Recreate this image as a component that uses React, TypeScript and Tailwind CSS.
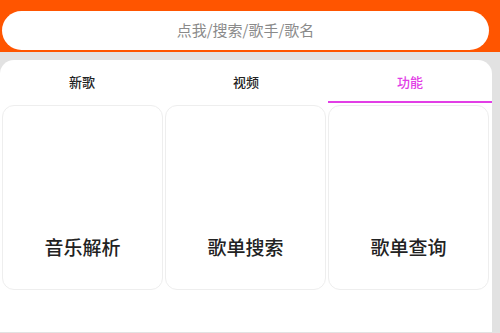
import React from 'react';

const tabs = ['新歌', '视频', '功能'];
const tools = ['音乐解析', '歌单搜索', '歌单查询'];

export default function App() {
  const active = 2;
  return (
    <div
      className="flex h-[333px] w-[500px] flex-col overflow-hidden bg-[#e2e2e2]"
      style={{ fontFamily: '"Noto Sans CJK SC", "Noto Sans", sans-serif' }}
    >
      {/* search header */}
      <div className="h-[52px] shrink-0 bg-[#ff5500] pl-[2px] pr-[11px] pt-[11px]">
        <div className="flex h-[39px] items-center justify-center rounded-full bg-white text-[15px] text-[#8a8a8a]">
          点我/搜索/歌手/歌名
        </div>
      </div>

      <div className="flex flex-1 pb-[1px] pr-[8px] pt-[8px]">
        <div className="flex flex-1 flex-col rounded-t-[14px] bg-white">
          {/* tabs */}
          <div className="grid h-[43px] grid-cols-3">
            {tabs.map((t, i) => (
              <div key={t} className="relative flex items-center justify-center">
                <span
                  className={
                    'pt-[1px] text-[13px] font-medium ' +
                    (i === active ? 'text-[#e23ee6]' : 'text-[#222]')
                  }
                >
                  {t}
                </span>
                {i === active && (
                  <div className="absolute bottom-0 left-0 right-0 h-[2px] bg-[#e23ee6]" />
                )}
              </div>
            ))}
          </div>

          {/* tool cards */}
          <div className="grid grid-cols-3 gap-[2px] pl-[2px] pr-[3px] pt-[2px]">
            {tools.map((t) => (
              <div
                key={t}
                className="flex h-[185px] items-end justify-center rounded-[12px] border border-[#eeeeee] pb-[28px]"
              >
                <span className="text-[19px] font-medium text-[#222]">{t}</span>
              </div>
            ))}
          </div>
        </div>
      </div>
    </div>
  );
}
